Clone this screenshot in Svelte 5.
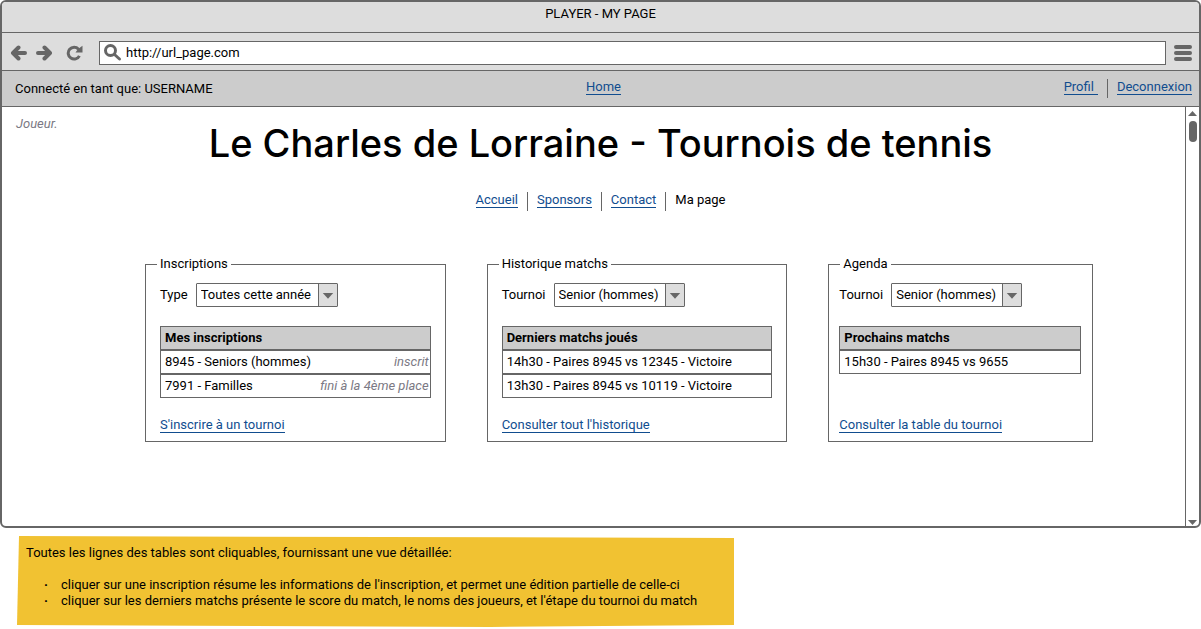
<script>
  const menu = ['Accueil', 'Sponsors', 'Contact'];

  const panels = [
    {
      id: 'inscriptions',
      title: 'Inscriptions',
      label: 'Type',
      option: 'Toutes cette année',
      heading: 'Mes inscriptions',
      rows: [
        { text: '8945 - Seniors (hommes)', note: 'inscrit' },
        { text: '7991 - Familles', note: 'fini à la 4ème place' }
      ],
      link: "S'inscrire à un tournoi"
    },
    {
      id: 'historique',
      title: 'Historique matchs',
      label: 'Tournoi',
      option: 'Senior (hommes)',
      heading: 'Derniers matchs joués',
      rows: [
        { text: '14h30 - Paires 8945 vs 12345 - Victoire' },
        { text: '13h30 - Paires 8945 vs 10119 - Victoire' }
      ],
      link: "Consulter tout l'historique"
    },
    {
      id: 'agenda',
      title: 'Agenda',
      label: 'Tournoi',
      option: 'Senior (hommes)',
      heading: 'Prochains matchs',
      rows: [{ text: '15h30 - Paires 8945 vs 9655' }],
      link: 'Consulter la table du tournoi'
    }
  ];
</script>

<div class="window">
  <div class="titlebar">PLAYER - MY PAGE</div>

  <div class="toolbar">
    <button class="tool" aria-label="Back">
      <svg width="18" height="16" viewBox="0 0 18 16"><path d="M8.500 2.500L3 8L8.500 13.500M4 8H15" /></svg>
    </button>
    <button class="tool" aria-label="Forward">
      <svg width="18" height="16" viewBox="0 0 18 16"><path d="M8.500 2.500L14 8L8.500 13.500M13 8H2" /></svg>
    </button>
    <button class="tool reload" aria-label="Reload">
      <svg width="18" height="16" viewBox="0 0 18 16">
        <path class="arc" d="M12.500 4.200A5.900 5.900 0 1 0 13.400 10.800" />
        <path class="solid" d="M16.500 .8V7.500H9.500L12 4Z" />
      </svg>
    </button>
    <div class="address">
      <svg width="18" height="18" viewBox="0 0 18 18">
        <circle cx="6.500" cy="6.500" r="5" />
        <path d="M10.500 10.500L15.500 15" />
      </svg>
      <input type="text" aria-label="Address" value="http://url_page.com" />
    </div>
    <button class="tool" aria-label="Menu">
      <svg width="18" height="18" viewBox="0 0 18 18"><path d="M2 3H16M2 9H16M2 15H16" /></svg>
    </button>
  </div>

  <header class="account">
    <span>Connecté en tant que: USERNAME</span>
    <nav class="links"><span class="item"><a href="#home">Home</a></span></nav>
    <nav class="links end">
      <span class="item"><a class="profile" href="#profil">Profil</a></span>
      <span class="item"><a href="#deconnexion">Deconnexion</a></span>
    </nav>
  </header>

  <div class="viewport">
    <main>
      <div class="masthead">
        <em>Joueur.</em>
        <h1>Le Charles de Lorraine - Tournois de tennis</h1>
      </div>

      <nav class="links menu">
        {#each menu as name}
          <span class="item"><a href="#{name}">{name}</a></span>
        {/each}
        <span class="item">Ma page</span>
      </nav>

      <div class="panels">
        {#each panels as panel}
          <fieldset class={panel.id}>
            <legend>{panel.title}</legend>
            <div class="filter">
              <label for={panel.id}>{panel.label}</label>
              <span class="dropdown">
                <select id={panel.id}><option>{panel.option}</option></select>
                <svg width="19" height="22" viewBox="0 0 19 22"><path d="M4 9H15L9.500 15Z" /></svg>
              </span>
            </div>
            <table>
              <thead>
                <tr><th>{panel.heading}</th></tr>
              </thead>
              <tbody>
                {#each panel.rows as row}
                  <tr>
                    <td>
                      <div class="cell">
                        <span>{row.text}</span>
                        {#if row.note}<em>{row.note}</em>{/if}
                      </div>
                    </td>
                  </tr>
                {/each}
              </tbody>
            </table>
            <div class="more"><a href="#{panel.id}">{panel.link}</a></div>
          </fieldset>
        {/each}
      </div>
    </main>

    <div class="scrollbar">
      <svg width="9" height="5" viewBox="0 0 9 5"><path d="M0 5L4.500 0L9 5Z" /></svg>
      <div class="thumb"></div>
      <svg width="9" height="5" viewBox="0 0 9 5"><path d="M0 0H9L4.500 5Z" /></svg>
    </div>
  </div>
</div>

<aside>
  <p>Toutes les lignes des tables sont cliquables, fournissant une vue détaillée:</p>
  <ul>
    <li>cliquer sur une inscription résume les informations de l'inscription, et permet une édition partielle de celle-ci</li>
    <li>cliquer sur les derniers matchs présente le score du match, le noms des joueurs, et l'étape du tournoi du match</li>
  </ul>
</aside>

<style>
  :global(body) {
    background: #fff;
    color: #000;
    font: 400 13px/16px Roboto, sans-serif;
  }

  .window {
    border: 2px solid #666;
    border-radius: 6px;
    overflow: hidden;
  }

  a {
    color: #114d8f;
    text-decoration: none;
    border-bottom: 1px solid #114d8f;
  }

  em {
    color: #7b7984;
  }

  .titlebar {
    height: 30px;
    padding-top: 4px;
    box-sizing: border-box;
    background: #ddd;
    text-align: center;
  }

  .toolbar {
    display: flex;
    align-items: center;
    gap: 8px;
    padding: 8px 7px 5px 8px;
    border: solid #666;
    border-width: 1px 0;
    background: #ddd;
  }

  .tool {
    display: flex;
    padding: 0;
    border: 0;
    background: none;
  }

  .tool svg,
  .address svg {
    fill: none;
    stroke: #666;
    stroke-width: 4;
    stroke-linecap: round;
    stroke-linejoin: round;
  }

  .reload {
    margin: 0 7px 0 4px;
  }

  .tool .arc {
    stroke-linecap: butt;
    stroke-width: 3;
  }

  .tool .solid {
    fill: #666;
    stroke: none;
  }

  .address {
    flex: 1;
    display: flex;
    align-items: center;
    gap: 4px;
    height: 22px;
    padding-left: 4px;
    border: 1px solid #666;
    background: #fff;
  }

  .address svg {
    stroke-width: 3;
  }

  input {
    flex: 1;
    padding: 0;
    border: 0;
    outline: 0;
    background: none;
    color: #000;
    font: inherit;
  }

  .account {
    display: grid;
    grid-template-columns: 1fr auto 1fr;
    align-items: center;
    height: 35px;
    padding: 0 7px 0 13px;
    border-bottom: 1px solid #666;
    background: #ccc;
  }

  .links {
    display: flex;
  }

  .item {
    height: 19px;
    padding: 0 9px;
    line-height: 15px;
  }

  .item + .item {
    border-left: 1px solid #666;
  }

  .end {
    justify-content: flex-end;
  }

  .end .item:last-child {
    padding-right: 0;
  }

  .profile {
    padding-right: 4px;
  }

  .viewport {
    display: flex;
  }

  main {
    flex: 1;
    padding: 9px 0 84px 14px;
  }

  .masthead {
    display: grid;
    grid-template-columns: 1fr auto 1fr;
  }

  h1 {
    margin: 0;
    font-family: Inter, sans-serif;
    font-size: 38px;
    font-weight: 500;
    line-height: 54px;
  }

  .menu {
    justify-content: center;
    margin-top: 22px;
  }

  .panels {
    display: grid;
    grid-template-columns: 301fr 301fr 265fr;
    gap: 41px;
    margin: 45px 92px 0 129px;
  }

  fieldset {
    display: flex;
    flex-direction: column;
    min-width: 0;
    margin: 0;
    padding: 11px 14px 8px;
    border: 1px solid #666;
  }

  .agenda {
    padding-left: 10px;
    padding-right: 11px;
  }

  legend {
    margin-left: -3px;
    padding: 0 3px;
  }

  .agenda legend {
    margin-left: 1px;
  }

  .filter {
    display: flex;
    align-items: center;
    gap: 8px;
  }

  .dropdown {
    display: grid;
    border: 1px solid #666;
    border-radius: 1px;
    background: #fff;
  }

  .dropdown > * {
    grid-area: 1 / 1;
  }

  .dropdown svg {
    justify-self: end;
    box-sizing: border-box;
    border-left: 1px solid #666;
    background: #ddd;
    fill: #666;
    pointer-events: none;
  }

  select {
    appearance: none;
    height: 22px;
    padding: 0 25px 0 4px;
    border: 0;
    background: none;
    color: #000;
    font: inherit;
  }

  table {
    width: 100%;
    margin: 19px 0;
    border-collapse: separate;
    border-spacing: 0;
  }

  th,
  td {
    height: 22px;
    padding: 0 1px 0 4px;
    border: 1px solid #666;
    text-align: left;
  }

  th {
    background: #ccc;
    font-weight: 700;
  }

  .cell {
    display: flex;
    justify-content: space-between;
    white-space: nowrap;
  }

  .more {
    margin-top: auto;
  }

  .scrollbar {
    display: flex;
    flex-direction: column;
    align-items: center;
    gap: 5px;
    width: 13px;
    padding: 4px 0 1px;
    border-left: 1px solid #666;
    fill: #666;
  }

  .thumb {
    width: 8px;
    height: 21px;
    margin-bottom: auto;
    border-radius: 4px;
    background: #666;
  }

  aside {
    max-width: 693px;
    margin: 8px 17px 0;
    padding: 9px 15px 18px 9px;
    background: #f1c232;
    clip-path: polygon(2px 0, 100% 2px, 100% calc(100% - 2px), 66% 100%, 0 calc(100% - 2px));
  }

  p {
    margin: 0 0 16px;
  }

  ul {
    margin: 0;
    padding: 0;
    list-style: none;
  }

  li {
    display: flex;
  }

  li::before {
    content: '·';
    flex: none;
    width: 17px;
    padding-left: 18px;
    font-weight: 700;
  }
</style>
